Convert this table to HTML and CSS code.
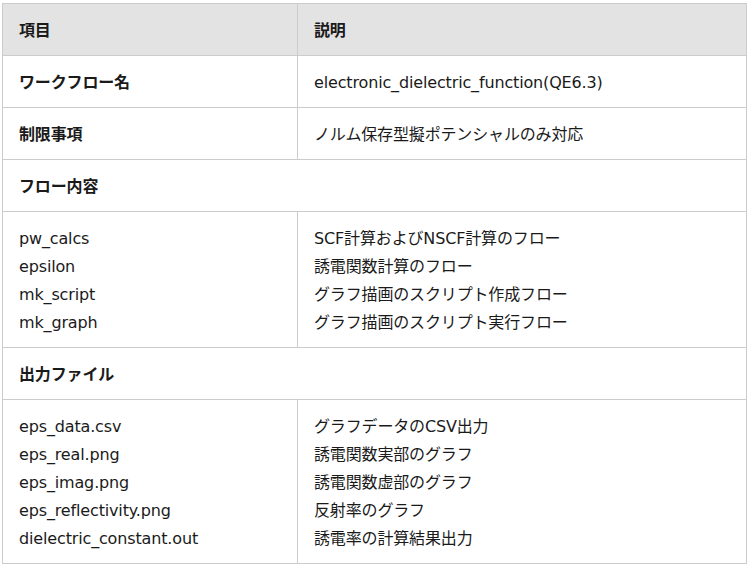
FILE: index.html
```html
<!DOCTYPE html>
<html lang="ja">
<head>
<meta charset="utf-8">
<link rel="stylesheet" href="styles.css">
</head>
<body>
<table class="spec">
  <thead>
    <tr><th class="col-item">項目</th><th>説明</th></tr>
  </thead>
  <tbody>
    <tr><td class="label">ワークフロー名</td><td>electronic_dielectric_function(QE6.3)</td></tr>
    <tr><td class="label">制限事項</td><td>ノルム保存型擬ポテンシャルのみ対応</td></tr>
    <tr><td class="label" colspan="2">フロー内容</td></tr>
    <tr>
      <td>pw_calcs<br>epsilon<br>mk_script<br>mk_graph</td>
      <td>SCF計算およびNSCF計算のフロー<br>誘電関数計算のフロー<br>グラフ描画のスクリプト作成フロー<br>グラフ描画のスクリプト実行フロー</td>
    </tr>
    <tr><td class="label" colspan="2">出力ファイル</td></tr>
    <tr>
      <td>eps_data.csv<br>eps_real.png<br>eps_imag.png<br>eps_reflectivity.png<br>dielectric_constant.out</td>
      <td>グラフデータのCSV出力<br>誘電関数実部のグラフ<br>誘電関数虚部のグラフ<br>反射率のグラフ<br>誘電率の計算結果出力</td>
    </tr>
  </tbody>
</table>
</body>
</html>
```
FILE: styles.css
```css
html, body {
  background: #ffffff;
}
body {
  margin: 3px 0 0 2px;
  font-family: "DejaVu Sans", "Noto Sans CJK JP", sans-serif;
  font-size: 16px;
  letter-spacing: -0.15px;
  color: #1a1a1a;
}
.spec {
  border-collapse: collapse;
  width: 745px;
  table-layout: fixed;
}
.spec th, .spec td {
  border: 1px solid #cccccc;
  padding: 13px 16px 10px 16px;
  line-height: 28px;
  text-align: left;
  vertical-align: top;
}
.spec th {
  background: #e3e3e3;
  font-weight: 700;
}
.col-item {
  width: 262px;
}
.spec td.label {
  font-weight: 700;
}
```
